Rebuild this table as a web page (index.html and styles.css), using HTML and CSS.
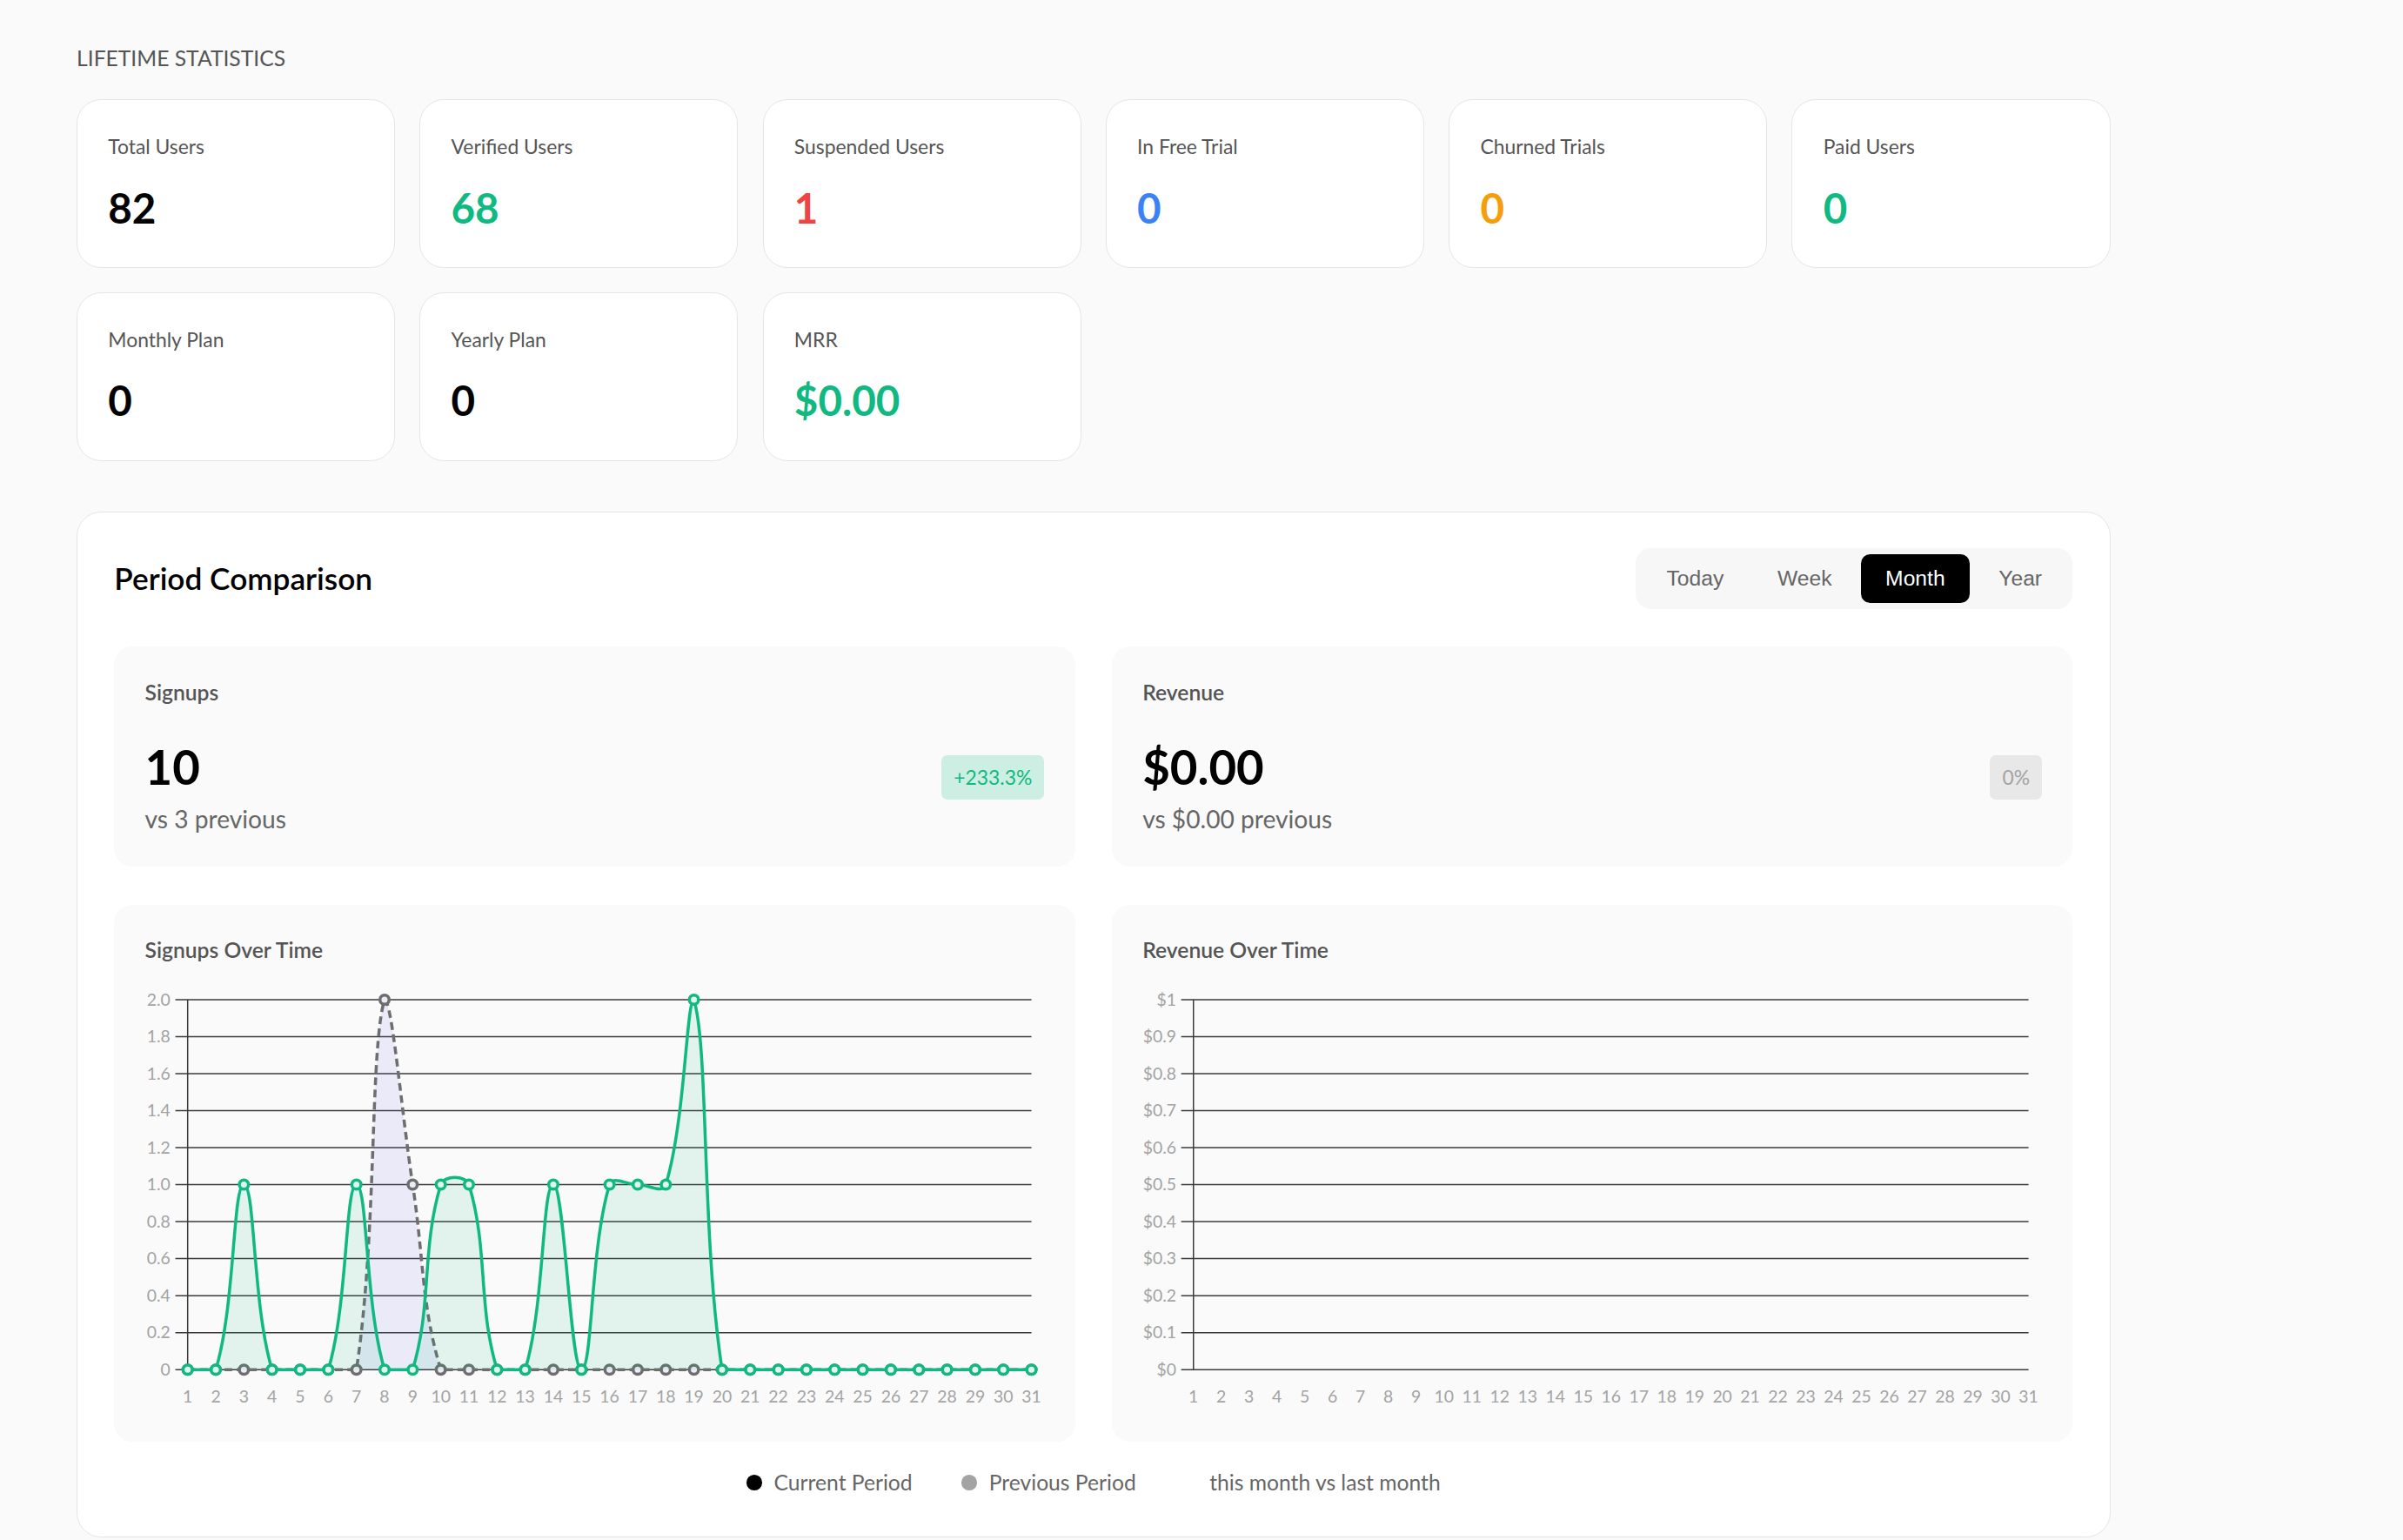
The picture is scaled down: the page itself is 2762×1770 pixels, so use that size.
FILE: index.html
```html
<!DOCTYPE html>
<html lang="en">
<head>
<meta charset="utf-8">
<title>Lifetime Statistics</title>
<link rel="stylesheet" href="styles.css">
</head>
<body>
<div class="page">
  <h2 class="section-title">Lifetime Statistics</h2>
  <div class="stats-grid">
    <div class="stat-card"><div class="stat-label">Total Users</div><div class="stat-value">82</div></div>
    <div class="stat-card"><div class="stat-label">Verified Users</div><div class="stat-value c-green">68</div></div>
    <div class="stat-card"><div class="stat-label">Suspended Users</div><div class="stat-value c-red">1</div></div>
    <div class="stat-card"><div class="stat-label">In Free Trial</div><div class="stat-value c-blue">0</div></div>
    <div class="stat-card"><div class="stat-label">Churned Trials</div><div class="stat-value c-amber">0</div></div>
    <div class="stat-card"><div class="stat-label">Paid Users</div><div class="stat-value c-green">0</div></div>
    <div class="stat-card"><div class="stat-label">Monthly Plan</div><div class="stat-value">0</div></div>
    <div class="stat-card"><div class="stat-label">Yearly Plan</div><div class="stat-value">0</div></div>
    <div class="stat-card"><div class="stat-label">MRR</div><div class="stat-value c-green">$0.00</div></div>
  </div>

  <section class="period-card">
    <div class="period-header">
      <h3 class="period-title">Period Comparison</h3>
      <div class="tabs">
        <button class="tab">Today</button>
        <button class="tab">Week</button>
        <button class="tab active">Month</button>
        <button class="tab">Year</button>
      </div>
    </div>

    <div class="compare-grid">
      <div class="compare-card">
        <div class="compare-label">Signups</div>
        <div class="compare-row">
          <div class="compare-value">10</div>
          <span class="badge badge-up">+233.3%</span>
        </div>
        <div class="compare-prev">vs 3 previous</div>
      </div>
      <div class="compare-card">
        <div class="compare-label">Revenue</div>
        <div class="compare-row">
          <div class="compare-value">$0.00</div>
          <span class="badge badge-flat">0%</span>
        </div>
        <div class="compare-prev">vs $0.00 previous</div>
      </div>
    </div>

    <div class="chart-grid">
      <div class="chart-card">
        <div class="chart-title">Signups Over Time</div>
        <svg class="chart" id="signups-chart" viewBox="0 0 586 280" preserveAspectRatio="none"></svg>
      </div>
      <div class="chart-card">
        <div class="chart-title">Revenue Over Time</div>
        <svg class="chart" id="revenue-chart" viewBox="0 0 586 280" preserveAspectRatio="none"></svg>
      </div>
    </div>

    <div class="legend">
      <div class="legend-item"><span class="dot dot-current"></span>Current Period</div>
      <div class="legend-item"><span class="dot dot-prev"></span>Previous Period</div>
      <div class="legend-note">this month vs last month</div>
    </div>
  </section>
</div>
<script src="script.js"></script>
</body>
</html>
```

FILE: styles.css
```css
* { box-sizing: border-box; }

html, body {
  margin: 0;
  background: #fafafa;
}

body {
  font-family: Lato, "Open Sans", sans-serif;
  color: #0a0a0a;
}

.page {
  zoom: 1.7615;
  width: 1568px;
  min-height: 1005px;
  padding: 28px 0 0 50px;
}

.section-title {
  margin: 0 0 17px;
  font-size: 14px;
  line-height: 20px;
  font-weight: 400;
  letter-spacing: 0;
  text-transform: uppercase;
  color: #555555;
}

.stats-grid {
  display: grid;
  grid-template-columns: repeat(6, 1fr);
  gap: 16px;
  width: 1327px;
}

.stat-card {
  height: 110px;
  background: #ffffff;
  border: 1px solid #e5e5e5;
  border-radius: 16px;
  padding: 20px;
}

.stat-label {
  font-size: 13px;
  line-height: 20px;
  color: #555555;
}

.stat-value {
  margin-top: 10px;
  font-size: 27px;
  line-height: 40px;
  font-weight: 700;
  color: #000000;
}

.c-green { color: #10b981; }
.c-red { color: #ef4444; }
.c-blue { color: #3b82f6; }
.c-amber { color: #f59e0b; }

.period-card {
  margin-top: 33px;
  width: 1327px;
  height: 669px;
  background: #ffffff;
  border: 1px solid #e5e5e5;
  border-radius: 16px;
  padding: 23px 24px 22px;
}

.period-header {
  display: flex;
  justify-content: space-between;
  align-items: center;
  height: 40px;
  margin-bottom: 24px;
}

.period-title {
  margin: 0;
  font-size: 20px;
  line-height: 28px;
  font-weight: 600;
  color: #000000;
}

.tabs {
  display: flex;
  gap: 3px;
  padding: 4px;
  background: #f7f7f7;
  border-radius: 10px;
}

.tab {
  height: 32px;
  padding: 0 16px;
  border: 0;
  border-radius: 6px;
  background: transparent;
  font-family: "Liberation Sans", Arial, sans-serif;
  font-size: 14px;
  color: #666666;
}

.tab.active {
  background: #000000;
  color: #ffffff;
}

.compare-grid,
.chart-grid {
  display: grid;
  grid-template-columns: 1fr 1fr;
  gap: 24px;
}

.compare-card {
  height: 144px;
  background: #fafafa;
  border-radius: 12px;
  padding: 20px;
}

.compare-label {
  margin-bottom: 19px;
  font-size: 14px;
  line-height: 20px;
  font-weight: 600;
  color: #555555;
}

.compare-row {
  display: flex;
  justify-content: space-between;
  align-items: flex-end;
}

.compare-value {
  font-size: 31px;
  line-height: 40px;
  font-weight: 700;
  color: #000000;
}

.compare-prev {
  margin-top: 2px;
  font-size: 16px;
  line-height: 24px;
  color: #666666;
}

.badge {
  margin-bottom: -1px;
  padding: 4px 8px;
  border-radius: 4px;
  font-size: 13px;
  line-height: 21px;
}

.badge-up {
  background: #cdeee2;
  color: #10b981;
}

.badge-flat {
  background: #e8e8e8;
  color: #a3a3a3;
}

.chart-grid {
  margin-top: 25px;
}

.chart-card {
  height: 350px;
  background: #fafafa;
  border-radius: 12px;
  padding: 19px 20px 20px;
}

.chart-title {
  margin-bottom: 11px;
  font-size: 14px;
  line-height: 20px;
  font-weight: 600;
  color: #555555;
}

.chart {
  display: block;
  width: 100%;
  height: 280px;
  overflow: visible;
}

.grid line {
  stroke: #3a3a3a;
  stroke-width: 0.85;
}

.tick-label {
  font-family: Lato, "Open Sans", sans-serif;
  font-size: 11px;
  fill: #a3a3a3;
}

.area-current { fill: rgba(16, 185, 129, 0.1); }
.area-prev { fill: rgba(99, 102, 241, 0.1); }

.line-current {
  fill: none;
  stroke: #10b981;
  stroke-width: 2;
}

.line-prev {
  fill: none;
  stroke: #6e6e6e;
  stroke-width: 2;
  stroke-dasharray: 5 3;
}

.pt-current {
  fill: #e3f4ee;
  stroke: #10b981;
  stroke-width: 2;
}

.pt-prev {
  fill: #ececf6;
  stroke: #6e6e6e;
  stroke-width: 2;
}

.legend {
  display: flex;
  justify-content: center;
  align-items: center;
  gap: 32px;
  margin-top: 16px;
  font-size: 14px;
  line-height: 22px;
  color: #666666;
}

.legend-item {
  display: flex;
  align-items: center;
  gap: 8px;
}

.dot {
  width: 10px;
  height: 10px;
  border-radius: 50%;
}

.dot-current { background: #000000; }
.dot-prev { background: #a3a3a3; }

.legend-note {
  margin-left: 16px;
}
```

FILE: script.js
```js
(function () {
  var NS = 'http://www.w3.org/2000/svg';

  function make(tag, attrs, parent) {
    var n = document.createElementNS(NS, tag);
    for (var k in attrs) n.setAttribute(k, attrs[k]);
    if (parent) parent.appendChild(n);
    return n;
  }

  function clamp(v, a, b) { return Math.max(a, Math.min(b, v)); }

  // Chart.js style cubic spline (tension 0.4) with capped control points
  function splinePath(pts, t, area) {
    var n = pts.length, cps = [];
    for (var i = 0; i < n; i++) {
      var prev = pts[Math.max(0, i - 1)], cur = pts[i], next = pts[Math.min(n - 1, i + 1)];
      var d01 = Math.hypot(cur.x - prev.x, cur.y - prev.y);
      var d12 = Math.hypot(next.x - cur.x, next.y - cur.y);
      var s01 = d01 / (d01 + d12), s12 = d12 / (d01 + d12);
      if (isNaN(s01)) s01 = 0;
      if (isNaN(s12)) s12 = 0;
      var fa = t * s01, fb = t * s12;
      cps.push({
        px: clamp(cur.x - fa * (next.x - prev.x), area.left, area.right),
        py: clamp(cur.y - fa * (next.y - prev.y), area.top, area.bottom),
        nx: clamp(cur.x + fb * (next.x - prev.x), area.left, area.right),
        ny: clamp(cur.y + fb * (next.y - prev.y), area.top, area.bottom)
      });
    }
    var d = 'M' + pts[0].x.toFixed(2) + ',' + pts[0].y.toFixed(2);
    for (var j = 1; j < n; j++) {
      d += ' C' + cps[j - 1].nx.toFixed(2) + ',' + cps[j - 1].ny.toFixed(2) + ' ' +
        cps[j].px.toFixed(2) + ',' + cps[j].py.toFixed(2) + ' ' +
        pts[j].x.toFixed(2) + ',' + pts[j].y.toFixed(2);
    }
    return d;
  }

  function drawChart(svg, cfg) {
    var left = cfg.axisX, right = cfg.right, top = cfg.top, bottom = cfg.bottom;
    var step = (right - left) / (cfg.days - 1);
    var area = { left: left, right: right, top: top, bottom: bottom };
    var grid = make('g', { 'class': 'grid' }, svg);

    cfg.ticks.forEach(function (tick) {
      var y = bottom - (tick.v / cfg.max) * (bottom - top);
      make('line', { x1: left - 8, x2: right, y1: y, y2: y }, grid);
      var tx = make('text', { x: cfg.labelX, y: y + 3.8, 'text-anchor': 'end', 'class': 'tick-label' }, svg);
      tx.textContent = tick.label;
    });
    make('line', { x1: left, x2: left, y1: top, y2: bottom }, grid);

    for (var d = 1; d <= cfg.days; d++) {
      var t = make('text', { x: left + (d - 1) * step, y: 275, 'text-anchor': 'middle', 'class': 'tick-label' }, svg);
      t.textContent = d;
    }

    (cfg.series || []).forEach(function (s) {
      var pts = s.values.map(function (v, i) {
        return { x: left + i * step, y: bottom - (v / cfg.max) * (bottom - top) };
      });
      var line = splinePath(pts, 0.4, area);
      var last = pts[pts.length - 1], first = pts[0];
      make('path', { d: line + ' L' + last.x + ',' + bottom + ' L' + first.x + ',' + bottom + ' Z', 'class': 'area-' + s.kind }, svg);
      make('path', { d: line, 'class': 'line-' + s.kind }, svg);
      pts.forEach(function (p) {
        make('circle', { cx: p.x, cy: p.y, r: 3, 'class': 'pt-' + s.kind }, svg);
      });
    });
  }

  var days = 31;
  var current = [0,0,1,0,0,0,1,0,0,1,1,0,0,1,0,1,1,1,2,0,0,0,0,0,0,0,0,0,0,0,0];
  var previous = [0,0,0,0,0,0,0,2,1,0,0,0,0,0,0,0,0,0,0,0,0,0,0,0,0,0,0,0,0,0,0];

  var signTicks = [];
  for (var i = 0; i <= 10; i++) {
    var v = i * 0.2;
    signTicks.push({ v: v, label: i === 0 ? '0' : v.toFixed(1) });
  }
  drawChart(document.getElementById('signups-chart'), {
    axisX: 27.6, right: 577.3, top: 11.9, bottom: 253.3, labelX: 16.3,
    max: 2, days: days, ticks: signTicks,
    series: [
      { kind: 'prev', values: previous },
      { kind: 'current', values: current }
    ]
  });

  var revTicks = [];
  for (var k = 0; k <= 10; k++) {
    var rv = k / 10;
    revTicks.push({ v: rv, label: k === 0 ? '$0' : (k === 10 ? '$1' : '$' + rv.toFixed(1)) });
  }
  drawChart(document.getElementById('revenue-chart'), {
    axisX: 33.3, right: 577.3, top: 11.9, bottom: 253.3, labelX: 22.1,
    max: 1, days: days, ticks: revTicks, series: []
  });
})();
```
